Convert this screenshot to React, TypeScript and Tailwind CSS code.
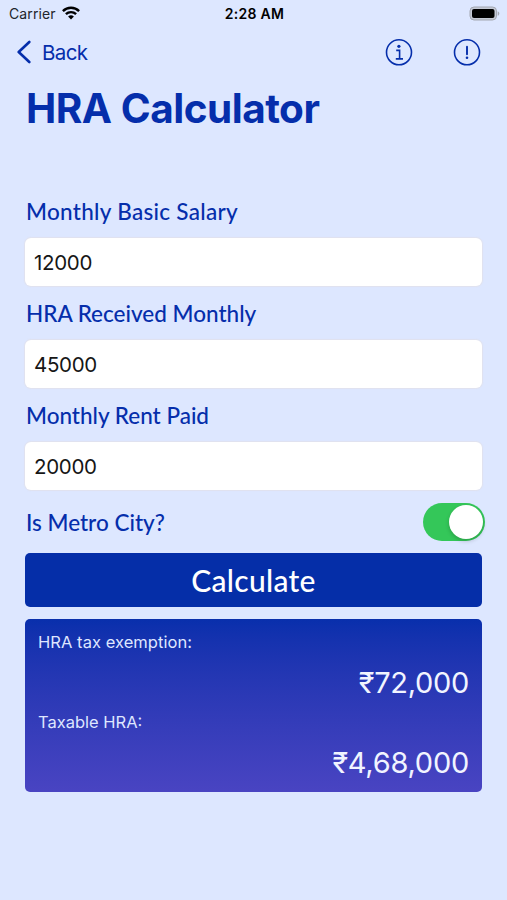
import { useState } from "react";
import clsx from "clsx";

const METRO_RATE = 0.5;
const NON_METRO_RATE = 0.4;

const rupees = new Intl.NumberFormat("en-IN", { maximumFractionDigits: 0 });

type Result = { exempt: number; taxable: number };

function calculateHra(basic: number, hra: number, rent: number, metro: boolean): Result {
  const received = hra * 12;
  const bySalary = basic * 12 * (metro ? METRO_RATE : NON_METRO_RATE);
  const byRent = Math.max(0, rent * 12 - basic * 12 * 0.1);
  const exempt = Math.min(received, bySalary, byRent);
  return { exempt, taxable: received - exempt };
}

function StatusBar() {
  return (
    <div className="grid h-7 grid-cols-3 items-center pl-[9px] pr-[7px] text-[14px] text-black">
      <div className="flex items-center gap-[6px]">
        <span className="-mt-px tracking-[0.1px] text-[#22252c]">Carrier</span>
        <svg viewBox="0 0 18 14" className="-mt-[2px] h-[14px] w-[18px]" fill="none" stroke="currentColor" strokeWidth="2.4">
          <path d="M0.9 5.1a11.6 11.6 0 0 1 16.2 0" />
          <path d="M3.9 8.2a7.3 7.3 0 0 1 10.2 0" />
          <path d="M9 13.6 6.1 10.6a4.1 4.1 0 0 1 5.8 0Z" fill="currentColor" stroke="none" />
        </svg>
      </div>
      <span className="-mt-[2px] text-center font-semibold tracking-[0.3px]">2:28 AM</span>
      <svg viewBox="0 0 31 15" className="-mt-[2px] h-[15px] w-[31px] justify-self-end">
        <rect x="1" y="1" width="26.5" height="13" rx="4" fill="#c5cad6" stroke="#a3a7b1" strokeWidth="1" />
        <rect x="3" y="3" width="22.5" height="9" rx="2" fill="#000" />
        <path d="M28.7 5.2c1.1.4 1.6 1.3 1.6 2.3s-.5 1.9-1.6 2.3Z" fill="#a3a7b1" />
      </svg>
    </div>
  );
}

function NavBar() {
  return (
    <div className="flex h-12 items-center justify-between pl-[17px] pr-[26px]">
      <button type="button" className="flex items-center gap-[11px]">
        <svg viewBox="0 0 14 24" className="h-6 w-[14px]" fill="none" stroke="currentColor" strokeWidth="2.6" strokeLinecap="round" strokeLinejoin="round">
          <path d="M12.3 2 1.7 12l10.6 10" />
        </svg>
        <span className="pt-[2px] text-[20.5px] tracking-[-0.6px]">Back</span>
      </button>
      <div className="flex gap-10">
        <button type="button" aria-label="About HRA">
          <svg viewBox="0 0 28 28" className="size-7" fill="none" stroke="currentColor" strokeWidth="1.6">
            <circle cx="14" cy="14.3" r="12.5" />
            <circle cx="13.9" cy="8.3" r="1.6" fill="currentColor" stroke="none" />
            <path d="M11.2 12.4h3.4v8.4M10.8 20.9h7.2" />
          </svg>
        </button>
        <button type="button" aria-label="Disclaimer">
          <svg viewBox="0 0 28 28" className="size-7" fill="none" stroke="currentColor" strokeWidth="1.6">
            <circle cx="14" cy="14.3" r="12.5" />
            <path d="M14 8.6v7.6" strokeWidth="1.9" strokeLinecap="round" />
            <circle cx="14" cy="19.7" r="1.3" fill="currentColor" stroke="none" />
          </svg>
        </button>
      </div>
    </div>
  );
}

type FieldProps = {
  label: string;
  value: string;
  onChange: (value: string) => void;
  labelClass?: string;
};

function Field({ label, value, onChange, labelClass }: FieldProps) {
  return (
    <label className="flex flex-col">
      <span className={clsx("flex h-[54px] items-center whitespace-nowrap pl-px pt-[2px] font-[Lato] text-[22.5px] font-medium", labelClass)}>{label}</span>
      <input
        inputMode="numeric"
        value={value}
        onChange={(e) => onChange(e.target.value)}
        className="h-12 rounded-[6px] bg-white px-[9px] text-[20.5px] tracking-[-0.3px] text-[#161616] shadow-[0_0_1px_1px_rgba(225,225,235,0.8)] outline-none"
      />
    </label>
  );
}

export default function App() {
  const [basic, setBasic] = useState("12000");
  const [hra, setHra] = useState("45000");
  const [rent, setRent] = useState("20000");
  const [metro, setMetro] = useState(true);
  const [result, setResult] = useState<Result>(() => calculateHra(12000, 45000, 20000, true));

  return (
    <div className="min-h-screen bg-[#dde7ff] font-[Inter,sans-serif] text-[#052eab]">
      <StatusBar />
      <NavBar />

      <main className="flex flex-col px-[25px]">
        <h1 className="flex h-[66px] items-center pl-px text-[40.5px] font-bold tracking-[-0.5px]">HRA Calculator</h1>

        <div className="mt-[42px] flex flex-col">
          <Field label="Monthly Basic Salary" value={basic} onChange={setBasic} labelClass="tracking-[0.3px]" />
          <Field label="HRA Received Monthly" value={hra} onChange={setHra} labelClass="tracking-[0px]" />
          <Field label="Monthly Rent Paid" value={rent} onChange={setRent} labelClass="tracking-[0px]" />
        </div>

        <div className="-mr-[3px] mt-3 flex h-[39px] items-center justify-between">
          <span className="pl-px pt-[2px] font-[Lato] text-[22.5px] font-medium">Is Metro City?</span>
          <button
            type="button"
            role="switch"
            aria-checked={metro}
            aria-label="Is Metro City?"
            onClick={() => setMetro(!metro)}
            className={clsx("flex h-[38px] w-[62px] rounded-full p-[2px]", metro ? "justify-end bg-[#34c759]" : "justify-start bg-[#c9cedb]")}
          >
            <span className="size-[34px] rounded-full bg-white shadow-[0_2px_4px_rgba(0,0,0,0.2)]" />
          </button>
        </div>

        <button
          type="button"
          onClick={() => setResult(calculateHra(Number(basic), Number(hra), Number(rent), metro))}
          className="mt-3 h-[54px] rounded-[5px] bg-[#052ea8] font-[Lato] text-[30px] font-medium tracking-[0.3px] text-white"
        >
          Calculate
        </button>

        <section className="mt-3 flex h-[173px] flex-col rounded-[5px] bg-linear-to-b from-[#082fac] to-[#4944c2] px-[13px] text-[#f1f4ff]">
          <p className="mt-3 h-[22px] text-[16.5px] leading-[22px] tracking-[0.05px] text-[#dfe6ff]">HRA tax exemption:</p>
          <p className="mt-3 h-9 text-right text-[29px] leading-9 tracking-[-0.3px]">₹{rupees.format(result.exempt)}</p>
          <p className="mt-[10px] h-[22px] text-[16.5px] leading-[22px] text-[#dfe6ff]">Taxable HRA:</p>
          <p className="mt-3 h-9 text-right text-[29px] leading-9 tracking-[-0.25px]">₹{rupees.format(result.taxable)}</p>
        </section>
      </main>
    </div>
  );
}
